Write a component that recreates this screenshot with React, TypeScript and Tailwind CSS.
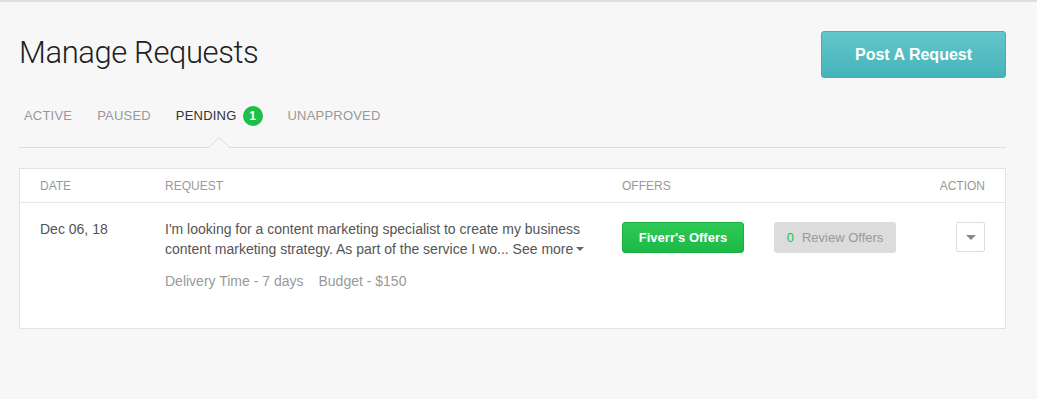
import React from "react";

export default function App() {
  const font = { fontFamily: '"Liberation Sans", Arial, sans-serif' };
  return (
    <div className="min-h-[399px] w-full bg-[#f7f7f7] border-t-2 border-[#dedede]" style={font}>
      <div className="mx-[19px] w-[987px]">
        <div className="flex items-start justify-between pt-[29px]">
          <h1
            className="mt-[2px] text-[31px] leading-[40px] font-light text-[#222] tracking-[-0.4px]"
            style={{ fontFamily: 'Roboto, "Liberation Sans", sans-serif' }}
          >
            Manage Requests
          </h1>
          <button className="w-[185px] h-[47px] rounded-[3px] border border-[#3fb0b6] bg-gradient-to-b from-[#63c6ca] to-[#44b4ba] text-white text-[16px] font-bold">
            Post A Request
          </button>
        </div>

        <div className="relative mt-[27px] flex items-center gap-[25px] pl-[5px] h-[22px] text-[13px] uppercase tracking-[0.2px]">
          <span className="text-[#999]">Active</span>
          <span className="text-[#999]">Paused</span>
          <span className="relative flex items-center gap-[6px] text-[#333]">
            Pending
            <span className="flex h-[20px] w-[20px] items-center justify-center rounded-full bg-[#1dbf47] text-[12px] font-bold text-white tracking-normal">
              1
            </span>
            <span className="absolute left-1/2 top-[31px] -translate-x-1/2 flex">
              <svg width="22" height="11" viewBox="0 0 22 11">
                <polyline points="0,11 11,0.5 22,11" fill="#f7f7f7" stroke="#dcdcdc" strokeWidth="1" />
              </svg>
            </span>
          </span>
          <span className="text-[#999]">Unapproved</span>
        </div>
        <div className="mt-[20px] h-px bg-[#dcdcdc]" />

        <div className="mt-[20px] border border-[#e3e3e3] bg-white h-[161px]">
          <div className="flex items-center h-[34px] border-b border-[#e6e6e6] px-5 text-[12px] uppercase text-[#999]">
            <div className="w-[125px]">Date</div>
            <div className="w-[457px]">Request</div>
            <div className="flex-1">Offers</div>
            <div>Action</div>
          </div>
          <div className="flex px-5 pt-[16px]">
            <div className="w-[125px] text-[14px] leading-[20px] text-[#555]">Dec 06, 18</div>
            <div className="w-[457px] pr-[25px]">
              <p className="text-[14px] leading-[20px] text-[#555]">
                I'm looking for a content marketing specialist to create my business content marketing strategy. As
                part of the service I wo...{" "}
                <span className="whitespace-nowrap text-[#555]">
                  See more
                  <span className="ml-[3px] inline-block align-middle border-x-[4px] border-t-[4px] border-x-transparent border-t-[#666] mb-[2px]" />
                </span>
              </p>
              <div className="mt-[12px] flex gap-[15px] text-[14px] leading-[20px] text-[#999]">
                <span>Delivery Time - 7 days</span>
                <span>Budget - $150</span>
              </div>
            </div>
            <div className="flex flex-1 items-start">
              <button className="mt-[3px] w-[122px] h-[31px] rounded-[3px] border border-[#19b043] bg-gradient-to-b from-[#2fca55] to-[#1bb946] text-white text-[13px] font-bold">
                Fiverr's Offers
              </button>
              <button className="mt-[3px] ml-[30px] w-[122px] h-[31px] rounded-[3px] bg-[#dcdcdc] text-[13px] text-[#999]">
                <span className="text-[#1dbf47] mr-[8px]">0</span>Review Offers
              </button>
            </div>
            <div className="mt-[3px] flex h-[30px] w-[29px] items-center justify-center rounded-[2px] border border-[#ddd] bg-white">
              <span className="inline-block border-x-[5px] border-t-[5px] border-x-transparent border-t-[#888]" />
            </div>
          </div>
        </div>
      </div>
    </div>
  );
}
